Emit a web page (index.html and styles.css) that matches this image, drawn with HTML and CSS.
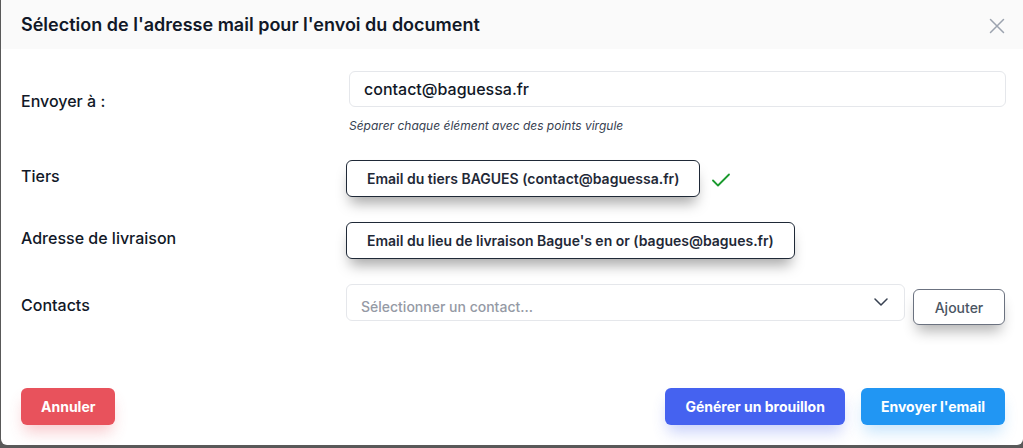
FILE: index.html
```html
<!DOCTYPE html>
<html>
<head>
    <title>Envoi du document</title>
    <meta charset="UTF-8" />
    <link rel="stylesheet" href="styles.css">
</head>
<body>
    <div class="modal">
        <div class="modal-header">
            <h2 class="modal-title">Sélection de l'adresse mail pour l'envoi du document</h2>
            <button class="close-btn" aria-label="Fermer">
                <svg width="16" height="16" viewBox="0 0 16 16"><path d="M1.5 1.5L14.5 14.5M14.5 1.5L1.5 14.5" stroke="#9ca3af" stroke-width="1.5" stroke-linecap="round"/></svg>
            </button>
        </div>

        <div class="modal-body">
            <div class="field">
                <label class="field-label">Envoyer à :</label>
                <div class="field-control">
                    <input class="text-input" type="text" value="contact@baguessa.fr">
                    <p class="help">Séparer chaque élément avec des points virgule</p>
                </div>
            </div>

            <div class="field">
                <label class="field-label">Tiers</label>
                <div class="field-control row">
                    <button class="pick-btn">Email du tiers BAGUES (contact@baguessa.fr)</button>
                    <svg class="check" width="20" height="16" viewBox="0 0 20 16"><path d="M2 8.5L7 13.5L18 2.5" fill="none" stroke="#1a9a2e" stroke-width="1.8" stroke-linecap="round" stroke-linejoin="round"/></svg>
                </div>
            </div>

            <div class="field">
                <label class="field-label">Adresse de livraison</label>
                <div class="field-control row">
                    <button class="pick-btn">Email du lieu de livraison Bague's en or (bagues@bagues.fr)</button>
                </div>
            </div>

            <div class="field">
                <label class="field-label flat">Contacts</label>
                <div class="field-control row top">
                    <div class="select">
                        <span class="placeholder">Sélectionner un contact...</span>
                        <svg width="14" height="8" viewBox="0 0 14 8"><path d="M1 1L7 7L13 1" fill="none" stroke="#374151" stroke-width="1.5" stroke-linecap="round" stroke-linejoin="round"/></svg>
                    </div>
                    <button class="add-btn">Ajouter</button>
                </div>
            </div>
        </div>

        <div class="modal-footer">
            <button class="btn btn-cancel">Annuler</button>
            <div class="footer-right">
                <button class="btn btn-draft">Générer un brouillon</button>
                <button class="btn btn-send">Envoyer l'email</button>
            </div>
        </div>
    </div>
</body>
</html>
```

FILE: styles.css
```css
body {
    margin: 0;
    background: #595959;
    font-family: Inter, "Noto Sans", sans-serif;
    overflow: hidden;
    height: 448px;
}

button {
    font-family: inherit;
    cursor: pointer;
}

.modal {
    margin-left: 1px;
    width: 1022px;
    height: 445px;
    background: #fff;
    border-radius: 0 0 6px 6px;
    display: flex;
    flex-direction: column;
}

.modal-header {
    height: 49px;
    background: #fafafa;
    display: flex;
    align-items: center;
    justify-content: space-between;
    padding: 0 18px 0 20px;
}

.modal-title {
    margin: 0;
    font-size: 18px;
    font-weight: 600;
    color: #111827;
}

.close-btn {
    background: none;
    border: none;
    padding: 0;
    width: 16px;
    height: 16px;
    margin-top: 3px;
}

.modal-body {
    padding: 22px 17px 0 20px;
    display: flex;
    flex-direction: column;
    gap: 25px;
}

.field {
    display: grid;
    grid-template-columns: 325px 1fr;
    align-items: center;
}

.field-label {
    font-size: 16px;
    font-weight: 500;
    color: #111827;
    padding-bottom: 5px;
}

.field-label.flat {
    padding-bottom: 0;
}

.field-control.row {
    display: flex;
    align-items: center;
}

.field-control.top {
    align-items: flex-start;
}

.text-input {
    display: block;
    box-sizing: border-box;
    width: calc(100% - 3px);
    margin-left: 3px;
    height: 36px;
    border: 1px solid #e5e7eb;
    border-radius: 6px;
    padding: 0 14px;
    font-family: inherit;
    font-size: 16px;
    font-weight: 500;
    color: #111827;
    outline: none;
}

.help {
    margin: 11px 0 1px 3px;
    font-size: 12px;
    line-height: 16px;
    font-style: italic;
    color: #374151;
}

.pick-btn {
    height: 37px;
    padding: 0 20px;
    background: #fff;
    border: 1px solid #1f2937;
    border-radius: 6px;
    font-size: 14px;
    font-weight: 600;
    color: #1f2937;
    box-shadow: 0 10px 14px -4px rgba(0, 0, 0, 0.35);
}

.check {
    margin-left: 11px;
    margin-top: 2px;
}

.select {
    box-sizing: border-box;
    width: 559px;
    height: 37px;
    border: 1px solid #e5e7eb;
    border-radius: 6px;
    display: flex;
    align-items: center;
    justify-content: space-between;
    padding: 0 16px 0 14px;
}

.select svg {
    margin-top: -2px;
}

.placeholder {
    font-size: 14px;
    font-weight: 500;
    color: #959aa5;
    margin-top: 7px;
}

.add-btn {
    margin-left: 8px;
    margin-top: 5px;
    width: 92px;
    height: 36px;
    background: #fff;
    border: 1px solid #6b7280;
    border-radius: 6px;
    font-size: 14px;
    font-weight: 500;
    color: #4b5563;
    box-shadow: 0 10px 14px -4px rgba(0, 0, 0, 0.3);
}

.modal-footer {
    margin-top: auto;
    padding: 0 18px 20px 20px;
    display: flex;
    justify-content: space-between;
}

.footer-right {
    display: flex;
    gap: 16px;
}

.btn {
    height: 37px;
    padding: 0 20px;
    border: none;
    border-radius: 6px;
    color: #fff;
    font-size: 14px;
    font-weight: 700;
}

.btn-cancel {
    background: #e8525c;
    box-shadow: 0 10px 15px -3px rgba(232, 82, 92, 0.3);
}

.btn-draft {
    background: #4562f0;
    box-shadow: 0 10px 15px -3px rgba(69, 98, 240, 0.3);
}

.btn-send {
    background: #2196f3;
    box-shadow: 0 10px 15px -3px rgba(33, 150, 243, 0.25);
}
```
